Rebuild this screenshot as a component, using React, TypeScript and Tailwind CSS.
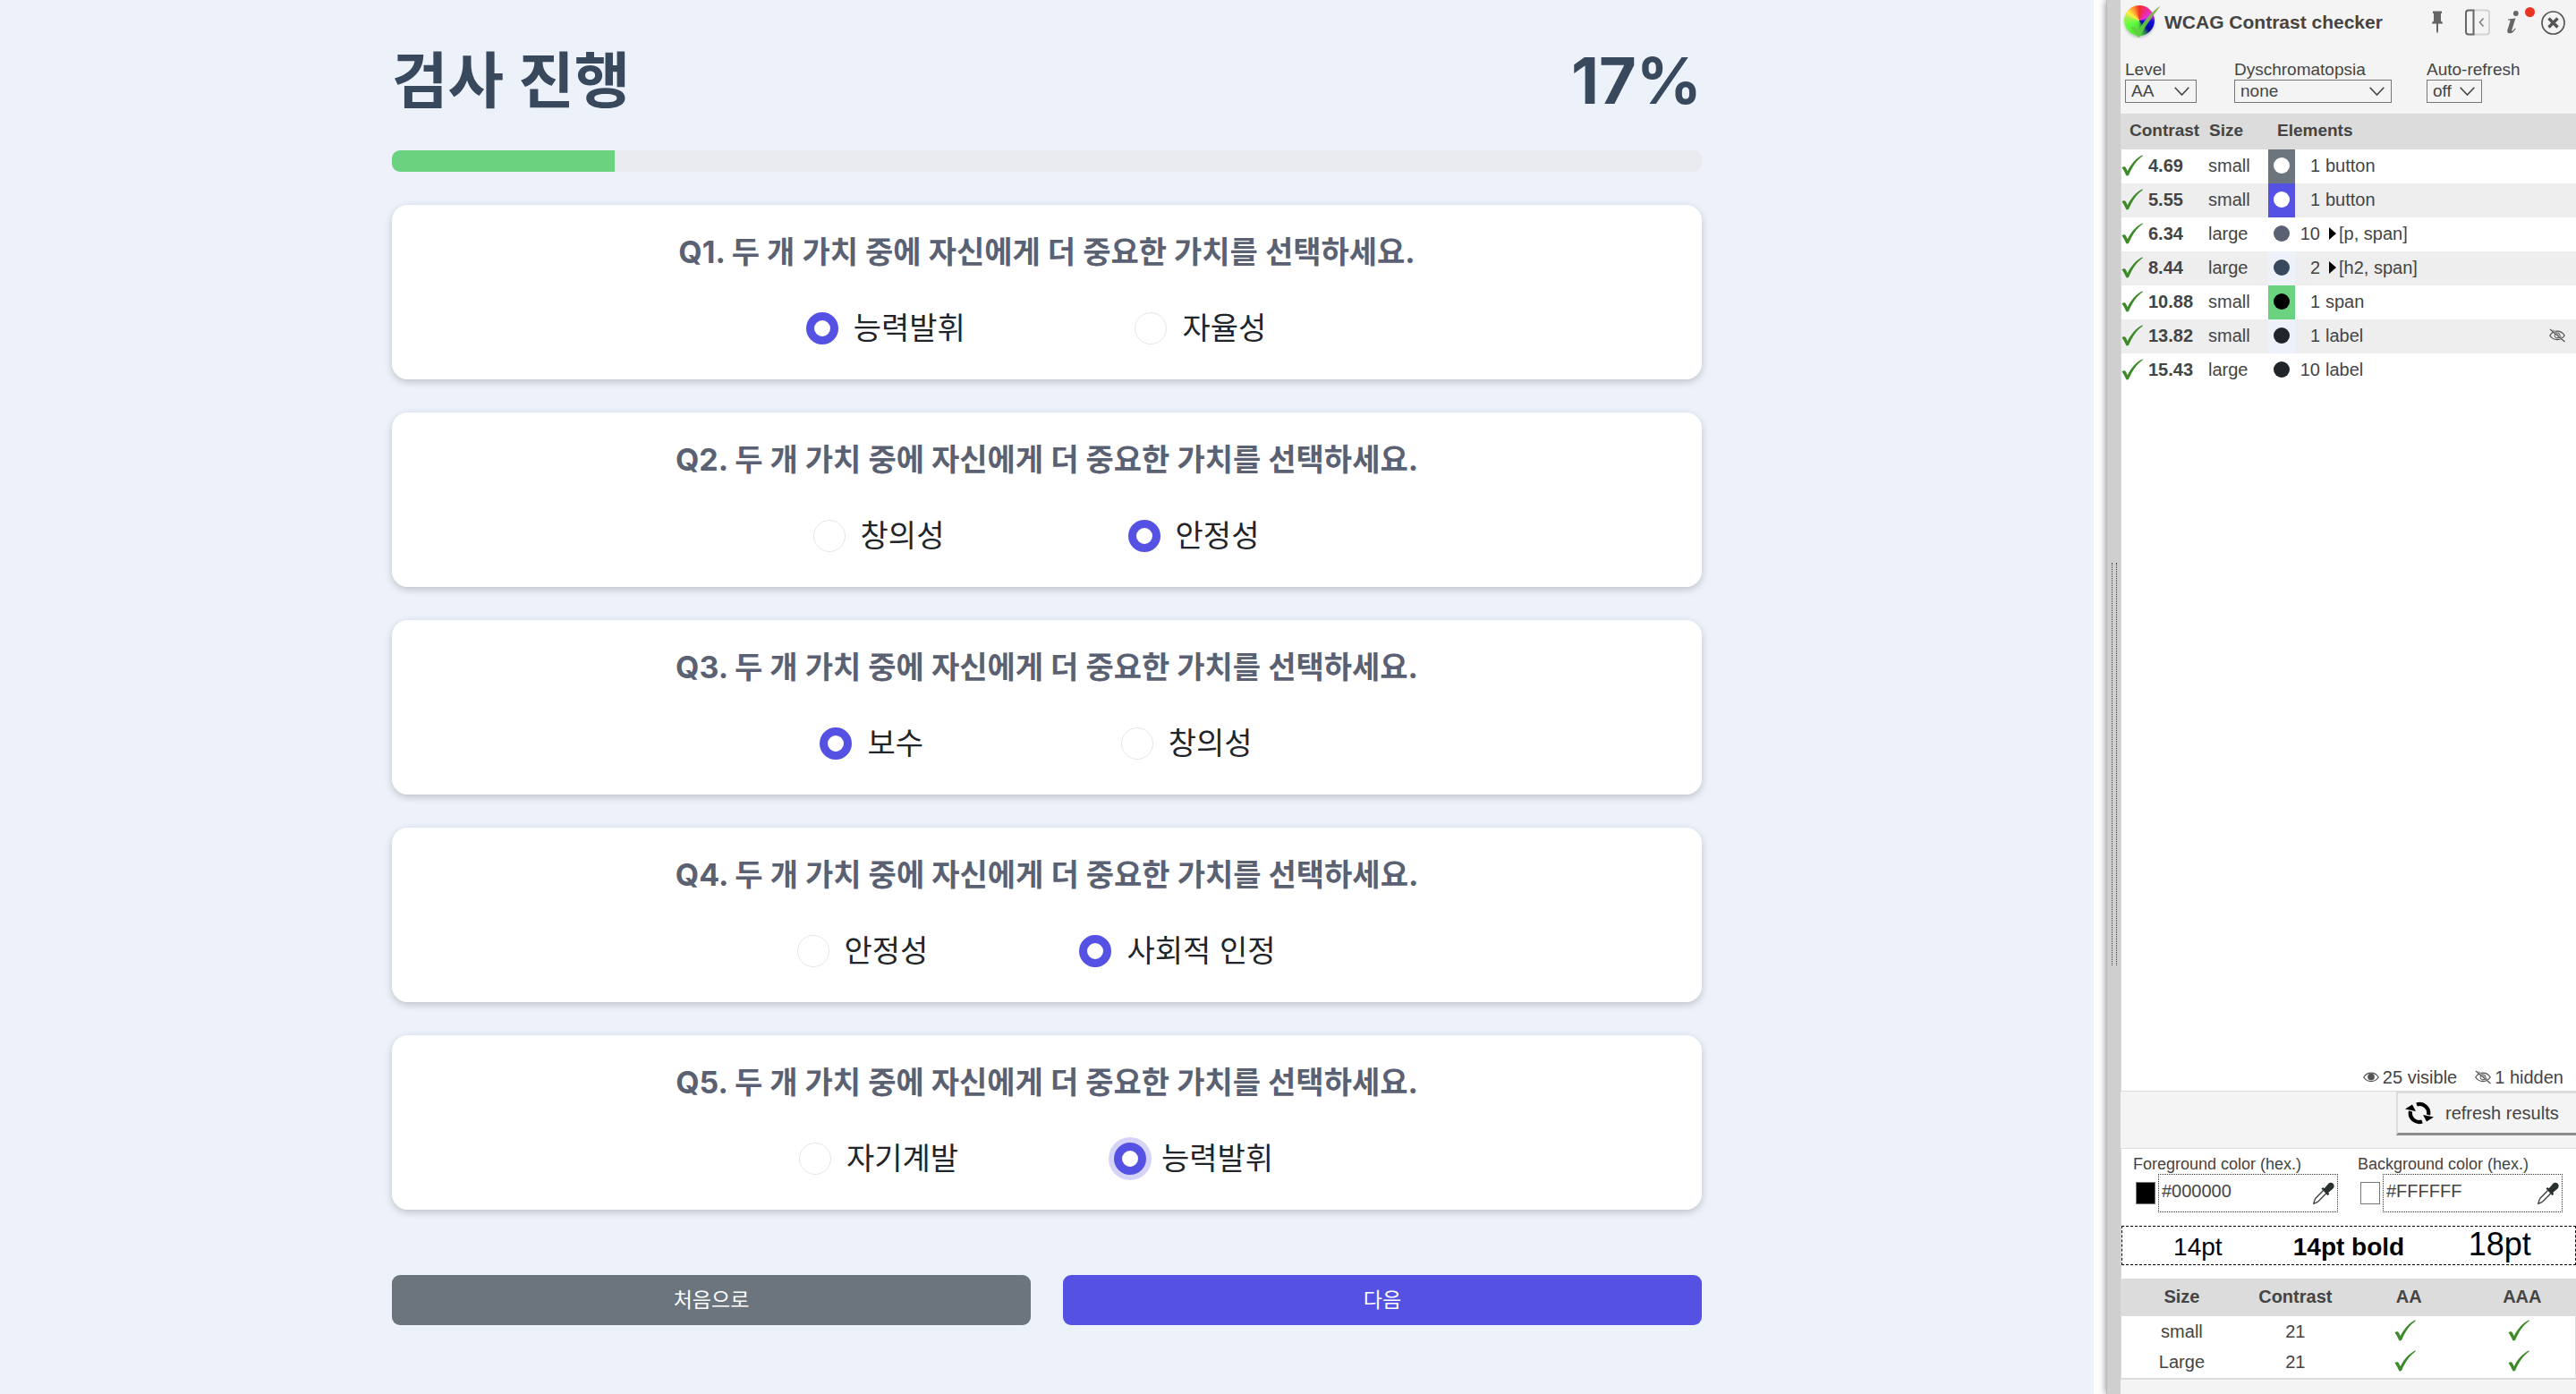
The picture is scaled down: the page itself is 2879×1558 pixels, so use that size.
import React, { useState } from "react";

const KO = "font-[Inter,'Noto_Sans_CJK_KR',sans-serif]";
const UI = "font-['Liberation_Sans',Arial,sans-serif]";

type Question = { id: number; options: [string, string]; answer: number; focused?: boolean };

const questions: Question[] = [
  { id: 1, options: ["능력발휘", "자율성"], answer: 0 },
  { id: 2, options: ["창의성", "안정성"], answer: 1 },
  { id: 3, options: ["보수", "창의성"], answer: 0 },
  { id: 4, options: ["안정성", "사회적 인정"], answer: 1 },
  { id: 5, options: ["자기계발", "능력발휘"], answer: 1, focused: true },
];

function QuestionCard({ q }: { q: Question }) {
  const [value, setValue] = useState(q.answer);
  return (
    <fieldset className="w-full rounded-[18px] bg-white pt-[26px] pb-[30px] shadow-[0_3px_9px_rgba(0,0,0,0.2)]">
      <p className="text-center text-[34px] leading-[54px] font-bold text-[#5a6172]">
        Q{q.id}. 두 개 가치 중에 자신에게 더 중요한 가치를 선택하세요.
      </p>
      <div className="mx-auto mt-[31px] flex max-w-[704px] justify-around">
        {q.options.map((label, i) => (
          <label
            key={label}
            className="flex h-[54px] items-center gap-[17px] pr-6 text-[34px] leading-[54px] text-[#212529]"
          >
            <input
              type="radio"
              name={`q${q.id}`}
              checked={value === i}
              onChange={() => setValue(i)}
              className={
                "size-9 appearance-none rounded-full border border-[#e4e6e9] bg-white checked:border-[9px] checked:border-[#5551e3]" +
                (q.focused && value === i ? " ring-6 ring-[#d5d4f8]" : "")
              }
            />
            {label}
          </label>
        ))}
      </div>
    </fieldset>
  );
}

function Check() {
  return (
    <svg viewBox="0 0 24 24" className="block size-6" aria-hidden="true">
      <path d="M0.5 14.5C2 12.6 4 12.8 5 14.6L6.8 18.2C10.5 10.5 16 4.2 23.5 0.3L23.8 1.2C17 6.2 12.5 12.5 8.2 22.5C7.4 23.7 5.6 23.9 5 22.6C3.6 19.4 2.4 16.8 0.5 14.5Z" fill="#3d8a2b" />
    </svg>
  );
}

function Eye({ off = false }: { off?: boolean }) {
  return (
    <svg viewBox="0 0 18 16" className="inline-block h-4 w-[18px] shrink-0" fill="none" stroke="#555" strokeWidth="1.3" aria-hidden="true">
      <path d="M0.8 8C4.5 1.5 13.5 1.5 17.2 8C13.5 14 4.5 14 0.8 8Z" />
      {off ? (
        <>
          <circle cx="9" cy="7.8" r="3" strokeWidth="1" />
          <path d="M3 1L17 14.5" stroke="#f4f4f4" strokeWidth="2" />
          <path d="M1 1L17.5 15" />
          <path d="M4 1.5L15 11" strokeWidth="0.8" />
        </>
      ) : (
        <circle cx="9" cy="7.5" r="3.2" fill="#555" />
      )}
    </svg>
  );
}

function Dropper() {
  return (
    <svg viewBox="0 0 24 25" className="block h-[25px] w-6" aria-hidden="true">
      <path d="M11.5 9.5L3 18.2C1.6 20.2 1.4 22.4 0.8 24.3C2.8 23.6 4.7 23 6.2 21.6L14.8 12.8" fill="#fff" stroke="#444" strokeWidth="1.4" />
      <path d="M9.5 7.5L11.2 6L12.7 7.3L17.6 1.6C20.4 -0.8 25 2.4 23.3 6.2C22.6 7.6 19 10.2 17.3 12L18.2 13.6L16.6 15.2Z" fill="#2a302d" />
    </svg>
  );
}

function Logo() {
  return (
    <span className="relative block h-[38px] w-[41px]">
      <span className="absolute top-0 left-0 size-[34px] rounded-full bg-[conic-gradient(from_0deg,#f0302a,#f02a90_35deg,#e030e8_65deg,#7a20d0_80deg,#1010e0_95deg,#0a0a9a_135deg,#2f9a50_160deg,#58e040_190deg,#60ff40_250deg,#a8f050_285deg,#fff040_305deg,#ff9030_335deg,#f0302a)] shadow-[0_2px_3px_rgba(0,0,0,0.2)]" />
      <svg viewBox="0 0 41 38" className="absolute inset-0 h-[38px] w-[41px]" aria-hidden="true">
        <path d="M7 24L12 24.5L16 28.5C22 17 30 8 40.5 0.5C33 11 26 19 17.5 35.5L15 35.5Z" fill="#5fcf3c" opacity="0.9" />
        <path d="M24 17C29 10 34 5 40.5 0.5C36 7 31 13 27 19Z" fill="#a09a66" opacity="0.6" />
      </svg>
    </span>
  );
}

function Picker({ id, label, options, width }: { id: string; label: string; options: string[]; width: string }) {
  return (
    <div className="flex flex-col items-start">
      <label htmlFor={id} className="block text-[19px] leading-[23px]">
        {label}
      </label>
      <span className="relative block">
        <select
          id={id}
          className={"block h-[26px] appearance-none border border-[#767676] bg-transparent pl-[6px] text-[19px] leading-6 " + width}
        >
          {options.map((o) => (
            <option key={o}>{o}</option>
          ))}
        </select>
        <svg viewBox="0 0 17 10" className="pointer-events-none absolute top-2 right-2 h-[10px] w-[17px]" fill="none" stroke="#444" strokeWidth="1.6" aria-hidden="true">
          <path d="M0.7 0.7L8.5 9L16.3 0.7" />
        </svg>
      </span>
    </div>
  );
}

type Result = { ratio: string; size: string; bg: string; dot: string; count: number; label: string; group?: boolean; hidden?: boolean };

const results: Result[] = [
  { ratio: "4.69", size: "small", bg: "bg-[#6c757d]", dot: "bg-white", count: 1, label: "button" },
  { ratio: "5.55", size: "small", bg: "bg-[#5551e3]", dot: "bg-white", count: 1, label: "button" },
  { ratio: "6.34", size: "large", bg: "bg-white", dot: "bg-[#5a6172]", count: 10, label: "[p, span]", group: true },
  { ratio: "8.44", size: "large", bg: "bg-[#edf2fa]", dot: "bg-[#38485d]", count: 2, label: "[h2, span]", group: true },
  { ratio: "10.88", size: "small", bg: "bg-[#6bd37f]", dot: "bg-black", count: 1, label: "span" },
  { ratio: "13.82", size: "small", bg: "bg-[#edf2fa]", dot: "bg-[#212529]", count: 1, label: "label", hidden: true },
  { ratio: "15.43", size: "large", bg: "bg-white", dot: "bg-[#212529]", count: 10, label: "label" },
];

function ColorField({ id, label, value, swatch }: { id: string; label: string; value: string; swatch: string }) {
  return (
    <div className="w-[229px]">
      <label htmlFor={id} className="block text-[18px] leading-[22px]">
        {label}
      </label>
      <div className="flex items-center">
        <span className={"ml-[3px] block h-[25px] w-[22px] shrink-0 border border-[#767676] " + swatch} />
        <span className="ml-[3px] flex h-[43px] min-w-0 flex-1 items-center border border-dotted border-[#333] px-[3px]">
          <input id={id} defaultValue={value} className="h-8 w-full min-w-0 flex-1 bg-transparent pb-1 text-[20px]" />
          <button type="button" className="shrink-0" aria-label={`Pick ${label}`}>
            <Dropper />
          </button>
        </span>
      </div>
    </div>
  );
}

function Checker() {
  return (
    <aside className={"flex w-[509px] shrink-0 flex-col bg-[#f4f4f4] text-[#444] " + UI}>
      <header className="flex h-[50px] items-center pr-3 pl-1">
        <Logo />
        <h1 className="ml-1 flex-1 text-[21px] font-bold">WCAG Contrast checker</h1>
        <button aria-label="Pin">
          <svg viewBox="0 0 12 26" className="block h-[26px] w-3" fill="#666">
            <path d="M1 0.5H11V3H10V11.5C11.3 12 12 13 12 14.5H7V23L6 25.5L5 23V14.5H0C0 13 0.7 12 2 11.5V3H1Z" />
          </svg>
        </button>
        <button aria-label="Dock left" className="ml-[25px]">
          <svg viewBox="0 0 28 30" className="block h-[30px] w-7" fill="none">
            <path d="M10 1.5H24Q27 1.5 27 4.5V25.5Q27 28.5 24 28.5H10" stroke="#d2d2d2" strokeWidth="2" />
            <path d="M9.5 1.5H4Q1 1.5 1 4.5V25.5Q1 28.5 4 28.5H9.5Z" stroke="#666" strokeWidth="2" />
            <path d="M20.5 10.5L16.5 15L20.5 19.5" stroke="#888" strokeWidth="1.8" />
          </svg>
        </button>
        <button aria-label="Information, new" className="ml-[18px] flex items-start">
          <svg viewBox="0 0 14 26" className="block h-[26px] w-[14px]" fill="#666">
            <circle cx="10.8" cy="3" r="2.9" />
            <path d="M2 9.5C5 9.3 8 9 10.5 8.3L6.3 21.5C6 22.8 7 22.7 7.8 21.9L9.8 19.6L10.6 20.2C8.8 23.3 6.4 25.3 4 25.3C1.6 25.3 0.8 23.6 1.4 21.4L4.4 12C4.7 10.9 4.2 10.6 2 10.5Z" />
          </svg>
          <span className="-mt-1 ml-[7px] size-[11px] rounded-full bg-[#ea3323]" />
        </button>
        <button aria-label="Close" className="ml-[7px]">
          <svg viewBox="0 0 27 27" className="block size-[27px]" fill="none" stroke="#555">
            <circle cx="13.5" cy="13.5" r="12.5" strokeWidth="1.7" />
            <path d="M8.5 8.5L18.5 18.5M18.5 8.5L8.5 18.5" strokeWidth="3.4" />
          </svg>
        </button>
      </header>

      <div className="mt-4 mb-3 flex pl-[5px]">
        <div className="w-[122px]">
          <Picker id="level" label="Level" options={["AA", "AAA"]} width="w-[80px]" />
        </div>
        <div className="w-[215px]">
          <Picker id="dys" label="Dyschromatopsia" options={["none"]} width="w-[176px]" />
        </div>
        <Picker id="auto" label="Auto-refresh" options={["off", "on"]} width="w-[62px]" />
      </div>

      <div className="flex flex-1 flex-col justify-between border-l border-[#dcdcdc] bg-white">
        <table className="w-full table-fixed border-collapse text-[20px] leading-6">
          <colgroup>
            <col className="w-[30px]" />
            <col className="w-[67px]" />
            <col className="w-[67px]" />
            <col className="w-[30px]" />
            <col />
          </colgroup>
          <thead>
            <tr className="h-10 bg-[#dcdcdc] text-left text-[19px]">
              <th colSpan={2} className="pb-[2px] pl-[9px]">Contrast</th>
              <th className="pb-[2px] pl-px">Size</th>
              <th colSpan={2} className="pb-[2px] pl-[10px]">Elements</th>
            </tr>
          </thead>
          <tbody>
            {results.map((r) => (
              <tr key={r.ratio} className="h-[38px] even:bg-[#eee]">
                <td className="pb-[2px]">
                  <Check />
                </td>
                <td className="pb-[2px] font-bold">{r.ratio}</td>
                <td className="pb-[2px]">{r.size}</td>
                <td className={"pb-[2px] " + r.bg}>
                  <span className={"mx-auto block size-[18px] rounded-full " + r.dot} />
                </td>
                <td className="pb-[2px]">
                  <div className="flex items-center pr-3">
                    <span className="w-[28px] text-right">{r.count}</span>
                    {r.group ? (
                      <span className="ml-[10px] h-0 w-0 border-y-[7px] border-l-[8px] border-y-transparent border-l-black" />
                    ) : null}
                    <span className={r.group ? "ml-[3px] flex-1" : "ml-[6px] flex-1"}>{r.label}</span>
                    {r.hidden ? <Eye off /> : null}
                  </div>
                </td>
              </tr>
            ))}
          </tbody>
        </table>
        <p className="flex items-center justify-end pr-[14px] pb-[3px] text-[20px] leading-6">
          <Eye />
          <span className="mr-5 ml-1">25 visible</span>
          <Eye off />
          <span className="ml-1">1 hidden</span>
        </p>
      </div>

      <div className="flex justify-end border-y border-[#dcdcdc] pb-[14px]">
        <button className="flex h-[49px] w-[201px] items-center border-t-2 border-b-3 border-l-2 border-t-[#dcdcdc] border-b-[#8c8c8c] border-l-[#dcdcdc] pl-2 text-[20px]">
          <svg viewBox="0 0 32 26" className="h-[26px] w-8" fill="none" stroke="#000" strokeWidth="4.2" aria-hidden="true">
            <path d="M13 3.5A10 10 0 0 1 26 15" />
            <path d="M19 22.5A10 10 0 0 1 6 11" />
            <path d="M20 15L32 17.5L24 22.5Z" fill="#000" stroke="none" />
            <path d="M12 11L0 8.5L8 3.5Z" fill="#000" stroke="none" />
          </svg>
          <span className="ml-[13px] pb-px whitespace-nowrap">refresh results</span>
        </button>
      </div>

      <section className="border-l border-[#dcdcdc] bg-white">
        <div className="flex gap-[22px] pt-[6px] pl-[13px]">
          <ColorField id="fg" label="Foreground color (hex.)" value="#000000" swatch="bg-black" />
          <ColorField id="bg" label="Background color (hex.)" value="#FFFFFF" swatch="bg-white" />
        </div>
        <div className="mt-[15px] grid h-11 grid-cols-3 items-baseline border border-dashed border-black text-center leading-10 text-black">
          <span className="text-[28px]">14pt</span>
          <span className="text-[28px] font-bold">14pt bold</span>
          <span className="text-[36px]">18pt</span>
        </div>
        <table className="mt-[15px] w-full table-fixed border-collapse border-r border-b-2 border-[#dcdcdc] text-center text-[20px]">
          <thead>
            <tr className="h-[42px] bg-[#dcdcdc]">
              {["Size", "Contrast", "AA", "AAA"].map((h) => (
                <th key={h} className="pb-[2px] pl-2">{h}</th>
              ))}
            </tr>
          </thead>
          <tbody>
            {["small", "Large"].map((s) => (
              <tr key={s} className="h-[35px]">
                <td className="pb-[2px] pl-2">{s}</td>
                <td className="pb-[2px] pl-2">21</td>
                <td className="pb-1">
                  <span className="flex justify-center">
                    <Check />
                  </span>
                </td>
                <td className="pb-1">
                  <span className="flex justify-center">
                    <Check />
                  </span>
                </td>
              </tr>
            ))}
          </tbody>
        </table>
      </section>
      <div className="h-4" />
    </aside>
  );
}

export default function App() {
  return (
    <div className="flex min-h-screen w-full bg-white">
      <main className={"flex-1 bg-[#edf2fa] " + KO}>
        <div className="mx-auto flex w-full max-w-[1464px] flex-col pt-9">
          <div className="flex h-[108px] items-center justify-between text-[#38485d]">
            <h2 className="text-[68px] leading-[108px] font-bold">검사 진행</h2>
            <span className="text-[72px] leading-[108px] font-bold">17%</span>
          </div>
          <div
            role="progressbar"
            aria-label="검사 진행"
            aria-valuenow={17}
            aria-valuemin={0}
            aria-valuemax={100}
            className="mt-6 h-6 overflow-hidden rounded-[9px] bg-[#e9ebee]"
          >
            <div className="h-full w-[17%] bg-[#6bd37f]" />
          </div>
          <form className="mt-[37px] flex flex-col gap-[37px]">
            {questions.map((q) => (
              <QuestionCard key={q.id} q={q} />
            ))}
            <div className="mt-[36px] grid grid-cols-2 gap-9 text-[23px] text-white">
              <button type="button" className="h-14 rounded-[9px] bg-[#6c757d]">
                처음으로
              </button>
              <button type="button" className="h-14 rounded-[9px] bg-[#5551e3]">
                다음
              </button>
            </div>
          </form>
        </div>
      </main>
      <div className="flex w-[30px] shrink-0 justify-end overflow-hidden">
        <div className="flex w-4 items-center justify-center border-l border-[#bdbdbd] bg-[#cfcfcf] shadow-[0_0_9px_rgba(0,0,0,0.5)]">
          <div className="mt-[150px] h-[450px] w-[6px] border-x border-dotted border-[#444]" />
        </div>
      </div>
      <Checker />
    </div>
  );
}
